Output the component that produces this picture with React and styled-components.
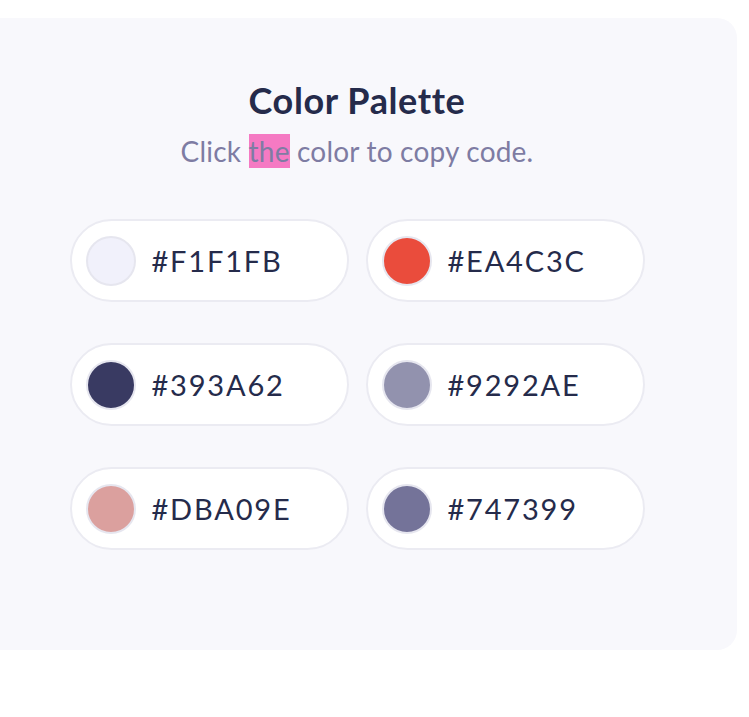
import React from 'react';
import styled, { createGlobalStyle } from 'styled-components';

const colors = ['#F1F1FB', '#EA4C3C', '#393A62', '#9292AE', '#DBA09E', '#747399'];

const GlobalStyle = createGlobalStyle`
  html, body {
    margin: 0;
    padding: 0;
    background: #ffffff;
    overflow: hidden;
  }
  body {
    font-family: Lato, "Noto Sans", sans-serif;
  }
`;

const Page = styled.div`
  padding-top: 18px;
`;

const Card = styled.section`
  width: 760px;
  height: 632px;
  margin-left: -23px;
  box-sizing: border-box;
  padding-top: 61px;
  border-radius: 20px;
  background: #f8f8fc;
  display: flex;
  flex-direction: column;
  align-items: center;
`;

const Title = styled.h1`
  margin: 0;
  font-size: 36px;
  line-height: 42px;
  font-weight: 700;
  letter-spacing: 0.6px;
  color: #252b4b;
`;

const Subtitle = styled.p`
  margin: 12px 0 0;
  font-size: 28px;
  line-height: 36px;
  letter-spacing: 0.2px;
  color: #7e7ca3;
`;

const Mark = styled.span`
  background: #f57ac3;
`;

const Grid = styled.div`
  display: grid;
  grid-template-columns: repeat(2, 279px);
  column-gap: 17px;
  row-gap: 41px;
  margin-top: 50px;
`;

const Chip = styled.button`
  height: 83px;
  box-sizing: border-box;
  display: flex;
  align-items: center;
  gap: 16px;
  padding: 0 0 0 14px;
  border: 2px solid #ebebf2;
  border-radius: 42px;
  background: #ffffff;
  cursor: pointer;
  font-family: Lato, "Noto Sans", sans-serif;
  font-size: 29px;
  letter-spacing: 1.8px;
  color: #252b4b;
`;

const Swatch = styled.span`
  width: 50px;
  height: 50px;
  box-sizing: border-box;
  border-radius: 50%;
  border: 2px solid #e6e6ef;
  background: ${p => p.$color};
  flex-shrink: 0;
`;

export default function App() {
  return (
    <Page>
      <GlobalStyle />
      <Card>
        <Title>Color Palette</Title>
        <Subtitle>
          Click <Mark>the</Mark> color to copy code.
        </Subtitle>
        <Grid>
          {colors.map(c => (
            <Chip key={c} type="button">
              <Swatch $color={c} />
              {c}
            </Chip>
          ))}
        </Grid>
      </Card>
    </Page>
  );
}
